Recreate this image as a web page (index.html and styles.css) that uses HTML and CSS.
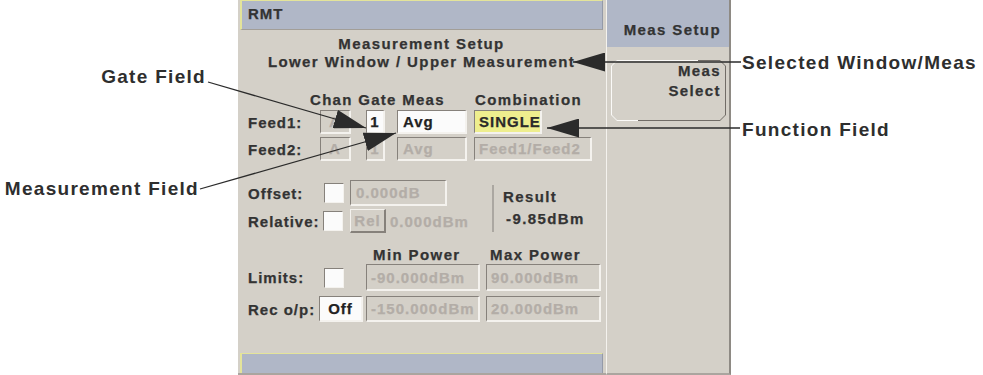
FILE: index.html
```html
<!DOCTYPE html>
<html>
<head>
  <title>Measurement Setup</title>
  <link rel="stylesheet" href="styles.css">
</head>
<body>
  <div class="page">
    <div class="notes-left">
      <div class="note note-gate">Gate Field</div>
      <div class="note note-meas">Measurement Field</div>
    </div>

    <div class="screen">
      <div class="main">
        <div class="titlebar">RMT</div>
        <div class="setup">
          <div class="heading">Measurement Setup<br>Lower Window / Upper Measurement</div>

          <div class="row colhead">
            <span class="ch-feed">Chan Gate Meas</span>
            <span>Combination</span>
          </div>
          <div class="row feed">
            <span class="lbl">Feed1:</span>
            <span class="fld dis mid w-chan">A</span>
            <span class="fld on mid w-gate">1</span>
            <span class="fld on w-meas">Avg</span>
            <span class="fld sel w-single">SINGLE</span>
          </div>
          <div class="row feed">
            <span class="lbl">Feed2:</span>
            <span class="fld dis mid w-chan">A</span>
            <span class="fld dis mid w-gate">1</span>
            <span class="fld dis w-meas">Avg</span>
            <span class="fld dis w-comb">Feed1/Feed2</span>
          </div>

          <div class="offset">
            <div class="offset-rows">
              <div class="row off-row">
                <span class="lbl l-offset">Offset:</span>
                <span class="chk"></span>
                <span class="fld dis w-offset">0.000dB</span>
              </div>
              <div class="row rel-row">
                <span class="lbl l-rel">Relative:</span>
                <span class="chk"></span>
                <span class="btn">Rel</span>
                <span class="rel-val">0.000dBm</span>
              </div>
            </div>
            <div class="result">
              <div>Result</div>
              <div class="result-val">-9.85dBm</div>
            </div>
          </div>

          <div class="row minmax">
            <span class="mm-min">Min Power</span>
            <span>Max Power</span>
          </div>
          <div class="row limits">
            <span class="lbl">Limits:</span>
            <span class="chk"></span>
            <span class="fld dis w-min">-90.000dBm</span>
            <span class="fld dis w-max">90.000dBm</span>
          </div>
          <div class="row rec">
            <span class="lbl">Rec o/p:</span>
            <span class="fld on mid w-off">Off</span>
            <span class="fld dis w-min">-150.000dBm</span>
            <span class="fld dis w-max">20.000dBm</span>
          </div>
        </div>
        <div class="statusbar"></div>
      </div>

      <div class="softkeys">
        <div class="sk-title">Meas Setup</div>
        <div class="sk-btn">
          <div class="sk-face">Meas<br>Select</div>
        </div>
      </div>
    </div>

    <div class="notes-right">
      <div class="note note-sel">Selected Window/Meas</div>
      <div class="note note-func">Function Field</div>
    </div>

    <!-- callout lines with arrow heads -->
    <svg class="callouts" width="983" height="375" viewBox="0 0 983 375">
      <defs>
        <marker id="head" viewBox="0 0 32 19" refX="32" refY="9.5" markerWidth="32" markerHeight="19" orient="auto" markerUnits="userSpaceOnUse">
          <path d="M0 0 L32 9.5 L0 19 Z" fill="#2b2b2b"/>
        </marker>
      </defs>
      <g stroke="#2b2b2b" stroke-width="1.3" fill="none">
        <line x1="208" y1="82" x2="366" y2="128" marker-end="url(#head)"/>
        <line x1="200" y1="189" x2="396" y2="133" marker-end="url(#head)"/>
        <line x1="741" y1="62" x2="573" y2="62" marker-end="url(#head)"/>
        <line x1="740" y1="128" x2="547" y2="128" marker-end="url(#head)"/>
      </g>
    </svg>
  </div>
</body>
</html>
```

FILE: styles.css
```css
body {
  margin: 0;
  background: #fff;
  font-family: "Liberation Sans", Arial, sans-serif;
}

.page {
  position: relative;
  display: flex;
  width: 983px;
  height: 375px;
  overflow: hidden;
}

/* annotation labels */
.notes-left {
  width: 238px;
  flex: none;
  display: flex;
  flex-direction: column;
  align-items: flex-end;
}

.note {
  font-size: 19px;
  font-weight: bold;
  line-height: 22px;
  letter-spacing: 1.3px;
  color: #2e2e2e;
  white-space: nowrap;
}

.note-gate {
  margin-top: 66px;
  margin-right: 32px;
}

.note-meas {
  margin-top: 90px;
  margin-right: 39px;
}

.notes-right {
  flex: 1;
  padding-left: 11px;
}

.note-sel {
  margin-top: 52px;
}

.note-func {
  margin-top: 45px;
}

.callouts {
  position: absolute;
  left: 0;
  top: 0;
  pointer-events: none;
}

/* instrument screen */
.screen {
  display: flex;
  width: 493px;
  flex: none;
  font-size: 15px;
  font-weight: bold;
  letter-spacing: 1.4px;
  color: #333;
  -webkit-text-stroke: 0.25px currentColor;
}

.main {
  width: 368px;
  box-sizing: border-box;
  padding: 0 3px 0 2px;
  background: #d4d0c8;
  display: flex;
  flex-direction: column;
  border-bottom: 2px solid #aaa59f;
}

.titlebar {
  height: 30px;
  box-sizing: border-box;
  background: #b0b7c7;
  border-top: 1px solid #e4e49a;
  border-left: 2px solid #e4e49a;
  border-right: 1px solid #949aa8;
  border-bottom: 1px solid #a29e98;
  padding: 5px 0 0 6px;
  line-height: 15px;
  letter-spacing: 1px;
}

.statusbar {
  height: 20px;
  box-sizing: border-box;
  background: #b0b7c7;
  border-top: 1px solid #e4e49a;
  border-left: 2px solid #e4e49a;
  border-right: 1px solid #949aa8;
}

.setup {
  flex: 1;
  padding-left: 8px;
}

.heading {
  margin: 5px 0 0 -8px;
  text-align: center;
  line-height: 18px;
}

.row {
  display: flex;
  align-items: center;
  white-space: nowrap;
}

.lbl {
  flex: none;
  letter-spacing: 1px;
}

.colhead {
  margin-top: 20px;
  line-height: 18px;
}

.ch-feed {
  margin-left: 62px;
  width: 165px;
  letter-spacing: 1.3px;
}

.feed {
  height: 24px;
  margin-top: 1px;
}

.feed + .feed {
  margin-top: 3px;
}

.feed .lbl {
  width: 72px;
}

/* sunken fields */
.fld {
  box-sizing: border-box;
  height: 100%;
  flex: none;
  display: flex;
  align-items: center;
  padding-left: 4px;
  letter-spacing: 1px;
  border-top: 1px solid #86817b;
  border-left: 1px solid #86817b;
  border-right: 2px solid #f4f2ee;
  border-bottom: 2px solid #f4f2ee;
}

.fld.dis {
  color: #b3ada7;
}

.fld.on {
  background: #fbfbfb;
  color: #222;
}

.fld.sel {
  background: #eeee8e;
  color: #2a2a2a;
}

.fld.mid {
  justify-content: center;
  padding-left: 0;
}

.w-chan {
  width: 31px;
  margin-right: 15px;
}

.w-gate {
  width: 19px;
  margin-right: 12px;
}

.w-meas {
  width: 70px;
  margin-right: 7px;
  padding-left: 5px;
}

.w-single {
  width: 68px;
}

.w-comb {
  width: 118px;
}

.chk {
  width: 20px;
  height: 20px;
  flex: none;
  box-sizing: border-box;
  background: #fbfbfb;
  border-top: 1px solid #86817b;
  border-left: 1px solid #86817b;
  border-right: 1px solid #f4f2ee;
  border-bottom: 1px solid #f4f2ee;
}

.offset {
  display: flex;
  margin-top: 19px;
}

.offset-rows {
  width: 244px;
}

.off-row {
  height: 26px;
}

.rel-row {
  height: 24px;
  margin-top: 3px;
}

.l-offset {
  width: 76px;
}

.l-rel {
  width: 75px;
}

.off-row .chk {
  margin-right: 6px;
}

.rel-row .chk {
  margin-right: 7px;
}

.w-offset {
  width: 97px;
  padding-left: 5px;
}

.btn {
  box-sizing: border-box;
  width: 36px;
  height: 24px;
  display: flex;
  align-items: center;
  justify-content: center;
  letter-spacing: 1px;
  color: #b3ada7;
  border-top: 1px solid #f4f2ee;
  border-left: 1px solid #f4f2ee;
  border-right: 2px solid #86817b;
  border-bottom: 2px solid #86817b;
}

.rel-val {
  margin-left: 4px;
  letter-spacing: 1px;
  color: #b3ada7;
}

.result {
  margin-top: 5px;
  height: 47px;
  box-sizing: border-box;
  padding: 1px 0 0 9px;
  border-left: 2px solid #aba7a1;
  line-height: 22px;
}

.result-val {
  margin-left: 3px;
}

.minmax {
  margin-top: 13px;
  line-height: 18px;
}

.mm-min {
  margin-left: 125px;
  width: 117px;
}

.limits {
  height: 27px;
}

.limits .lbl {
  width: 76px;
}

.limits .chk {
  margin-right: 22px;
}

.rec {
  height: 26px;
  margin-top: 5px;
}

.rec .lbl {
  width: 71px;
}

.w-off {
  width: 44px;
  margin-right: 3px;
}

.w-min {
  width: 114px;
  margin-right: 6px;
}

.w-max {
  width: 115px;
}

/* softkey column */
.softkeys {
  width: 125px;
  box-sizing: border-box;
  background: #d4d0c8;
  border-left: 1px solid #f4f2ee;
  border-right: 2px solid #8e8a84;
  border-bottom: 2px solid #aaa59f;
}

.sk-title {
  height: 47px;
  box-sizing: border-box;
  background: #b0b7c7;
  text-align: right;
  padding: 22px 8px 0 0;
  line-height: 16px;
}

.sk-btn {
  height: 61px;
  margin: 13px 3px 0 4px;
  padding: 1px;
  box-sizing: border-box;
  background: linear-gradient(135deg, #fbfaf8 50%, #716c67 50%);
  clip-path: polygon(6px 0, calc(100% - 6px) 0, 100% 6px, 100% calc(100% - 6px), calc(100% - 6px) 100%, 6px 100%, 0 calc(100% - 6px), 0 6px);
}

.sk-face {
  height: 100%;
  box-sizing: border-box;
  background: #d4d0c8;
  clip-path: polygon(5px 0, calc(100% - 5px) 0, 100% 5px, 100% calc(100% - 5px), calc(100% - 5px) 100%, 5px 100%, 0 calc(100% - 5px), 0 5px);
  text-align: right;
  padding: 0 4px 0 0;
  line-height: 20px;
}
```
